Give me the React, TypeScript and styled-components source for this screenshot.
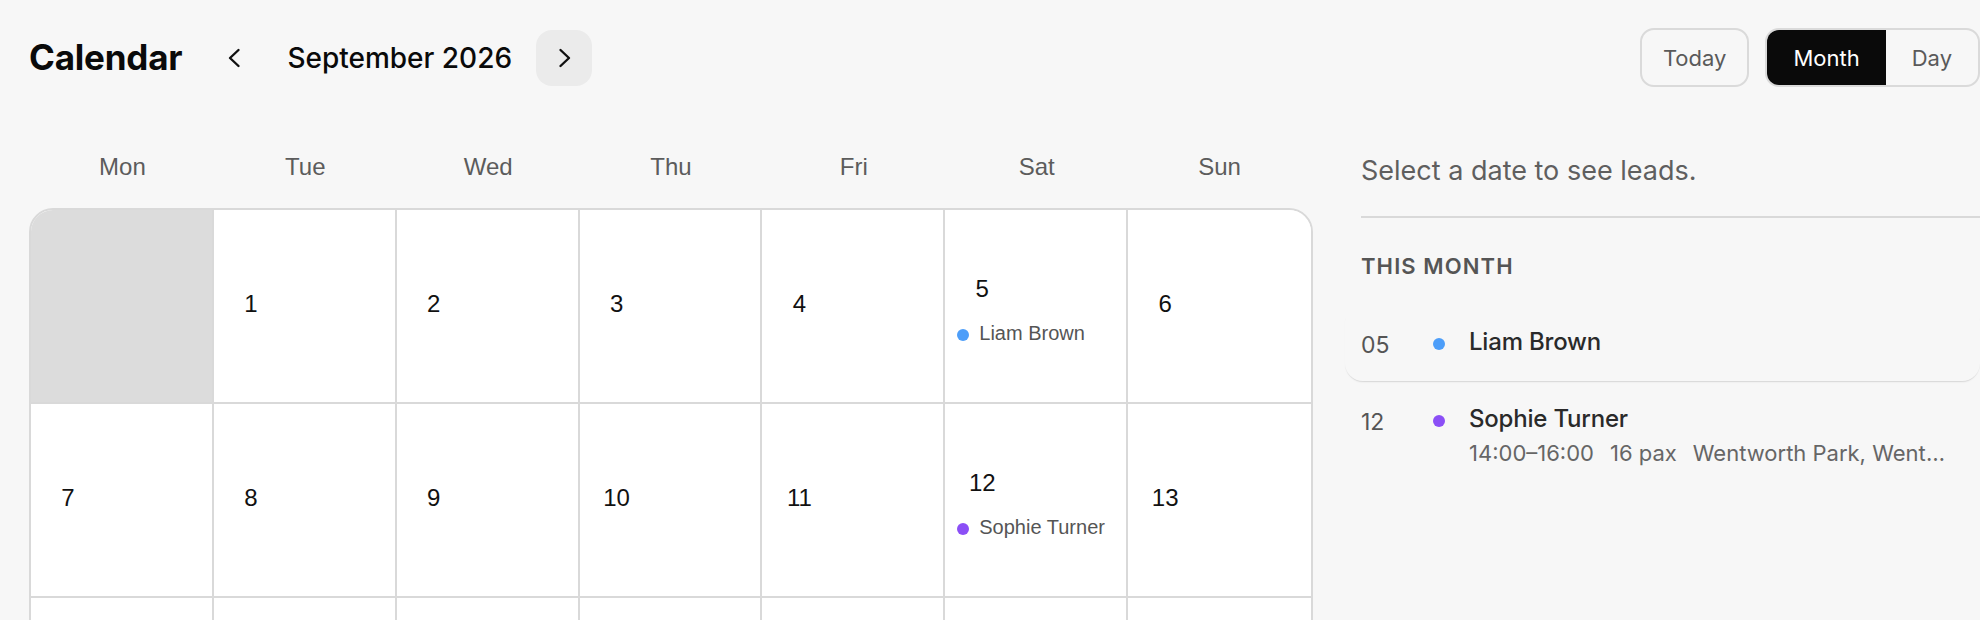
import React from 'react';
import styled, { createGlobalStyle } from 'styled-components';

interface Lead {
  day: number
  name: string
  color: string
  time?: string
  pax?: number
  place?: string
}

const leads: Lead[] = [
  { day: 5, name: 'Liam Brown', color: '#4d9ef9' },
  { day: 12, name: 'Sophie Turner', color: '#8b4ff6', time: '14:00–16:00', pax: 16, place: 'Wentworth Park, Wentworth Point' },
];

const weekdays = ['Mon', 'Tue', 'Wed', 'Thu', 'Fri', 'Sat', 'Sun'];

// Sept 2026 starts on a Tuesday, so one leading blank
const buildCells = (): (number | null)[] => {
  const cells: (number | null)[] = [null];
  for (let d = 1; d <= 30; d++) cells.push(d);
  while (cells.length % 7 !== 0) cells.push(null);
  return cells;
};

const Chevron: React.FC<{ dir: 'left' | 'right' }> = ({ dir }) => (
  <svg width="24" height="24" viewBox="0 0 24 24" fill="none" stroke="#111" strokeWidth="2.4" strokeLinecap="round" strokeLinejoin="round">
    {dir === 'left' ? <polyline points="15.5,4 7,12 15.5,20" /> : <polyline points="8.5,4 17,12 8.5,20" />}
  </svg>
);

const App: React.FC = () => {
  const cells = buildCells();

  return (
    <Page>
      <GlobalStyle />
      <Header>
        <HeaderLeft>
          <Title>Calendar</Title>
          <NavButton aria-label="Previous month"><Chevron dir="left" /></NavButton>
          <MonthLabel>September 2026</MonthLabel>
          <NavButton $hover aria-label="Next month"><Chevron dir="right" /></NavButton>
        </HeaderLeft>
        <HeaderRight>
          <TodayButton>Today</TodayButton>
          <Segmented>
            <Segment $active>Month</Segment>
            <Segment>Day</Segment>
          </Segmented>
        </HeaderRight>
      </Header>

      <Main>
        <CalendarColumn>
          <WeekdayRow>
            {weekdays.map((w) => <Weekday key={w}>{w}</Weekday>)}
          </WeekdayRow>
          <MonthGrid>
            {cells.map((day, i) => {
              const lead = leads.find((l) => l.day === day);
              return (
                <Cell key={i} $outside={day === null}>
                  {day !== null && <DayNumber>{day}</DayNumber>}
                  {lead && (
                    <CellEvent>
                      <Dot $color={lead.color} />
                      <span>{lead.name}</span>
                    </CellEvent>
                  )}
                </Cell>
              );
            })}
          </MonthGrid>
        </CalendarColumn>

        <SidePanel>
          <Prompt>Select a date to see leads.</Prompt>
          <Divider />
          <SectionLabel>THIS MONTH</SectionLabel>
          <LeadList>
            {leads.map((lead, i) => (
              <LeadCard key={lead.day} $active={i === 0}>
                <LeadDate>{String(lead.day).padStart(2, '0')}</LeadDate>
                <LeadDot $color={lead.color} />
                <LeadBody>
                  <LeadName>{lead.name}</LeadName>
                  {lead.time && (
                    <LeadDetails>
                      <span>{lead.time}</span>
                      <span>{lead.pax} pax</span>
                      <LeadPlace>{lead.place}</LeadPlace>
                    </LeadDetails>
                  )}
                </LeadBody>
              </LeadCard>
            ))}
          </LeadList>
        </SidePanel>
      </Main>
    </Page>
  );
};

const GlobalStyle = createGlobalStyle`
  html, body {
    margin: 0;
    padding: 0;
    background: #f7f7f7;
    overflow: hidden;
  }
  body {
    font-family: Inter, "Liberation Sans", sans-serif;
  }
  * {
    box-sizing: border-box;
  }
`;

const Page = styled.div`
  width: 1980px;
  height: 620px;
  overflow: hidden;
  padding: 28px 0 0 29px;
`;

const Header = styled.header`
  display: flex;
  justify-content: space-between;
  align-items: center;
  height: 59px;
`;

const HeaderLeft = styled.div`
  display: flex;
  align-items: center;
  gap: 24px;
`;

const Title = styled.h1`
  margin: 0 1px 0 0;
  font-size: 35px;
  font-weight: 700;
  color: #0a0a0a;
  letter-spacing: -0.2px;
  line-height: 1;
`;

const NavButton = styled.button<{ $hover?: boolean }>`
  width: 56px;
  height: 56px;
  border: none;
  border-radius: 16px;
  background: ${(p) => (p.$hover ? '#ebebeb' : 'transparent')};
  display: flex;
  align-items: center;
  justify-content: center;
  padding: 0;
  cursor: pointer;
`;

const MonthLabel = styled.span`
  font-size: 28px;
  font-weight: 500;
  color: #0a0a0a;
`;

const HeaderRight = styled.div`
  display: flex;
  align-items: center;
  gap: 16px;
`;

const TodayButton = styled.button`
  height: 59px;
  padding: 0 21px;
  border: 2px solid #dadada;
  border-radius: 14px;
  background: transparent;
  font-family: Inter, sans-serif;
  font-size: 22px;
  color: #5a5a5a;
  cursor: pointer;
`;

const Segmented = styled.div`
  display: flex;
  height: 59px;
  border: 2px solid #dadada;
  border-radius: 14px;
  overflow: hidden;
`;

const Segment = styled.button<{ $active?: boolean }>`
  padding: 0 26px;
  border: none;
  background: ${(p) => (p.$active ? '#0a0a0a' : 'transparent')};
  color: ${(p) => (p.$active ? '#ffffff' : '#5a5a5a')};
  font-family: Inter, sans-serif;
  font-size: 22px;
  cursor: pointer;
`;

const Main = styled.div`
  display: flex;
  align-items: flex-start;
  gap: 48px;
  margin-top: 60px;
`;

const CalendarColumn = styled.div`
  width: 1284px;
  flex-shrink: 0;
`;

const WeekdayRow = styled.div`
  display: grid;
  grid-template-columns: repeat(7, 1fr);
  height: 40px;
  padding: 0 2px;
`;

const Weekday = styled.div`
  text-align: center;
  line-height: 40px;
  font-family: "Liberation Sans", Arial, sans-serif;
  font-size: 24px;
  color: #5c5c5c;
`;

const MonthGrid = styled.div`
  margin-top: 21px;
  display: grid;
  grid-template-columns: repeat(7, 1fr);
  border: 2px solid #d9d9d9;
  border-radius: 24px;
  overflow: hidden;
  background: #fff;
`;

const Cell = styled.div<{ $outside?: boolean }>`
  height: 194px;
  padding: 0 11px 4px;
  display: flex;
  flex-direction: column;
  justify-content: center;
  gap: 6px;
  background: ${(p) => (p.$outside ? '#dcdcdc' : '#ffffff')};
  border-right: 2px solid #d9d9d9;
  border-bottom: 2px solid #d9d9d9;
  font-family: "Liberation Sans", Arial, sans-serif;

  &:nth-child(7n) {
    border-right: none;
  }
`;

const DayNumber = styled.div`
  width: 52px;
  height: 52px;
  display: flex;
  align-items: center;
  justify-content: center;
  font-size: 24px;
  color: #111;
`;

const CellEvent = styled.div`
  display: flex;
  align-items: center;
  gap: 10px;
  height: 24px;
  margin-left: 1px;
  font-size: 20px;
  color: #555;
  white-space: nowrap;
`;

const Dot = styled.span<{ $color: string }>`
  width: 12px;
  height: 12px;
  border-radius: 50%;
  flex-shrink: 0;
  margin-top: 3px;
  background: ${(p) => p.$color};
`;

const SidePanel = styled.aside`
  flex: 1;
  min-width: 0;
  padding-top: 5px;
`;

const Prompt = styled.p`
  margin: 0;
  font-size: 27px;
  line-height: 38px;
  color: #5f5f5f;
`;

const Divider = styled.hr`
  margin: 26px 0 0;
  border: none;
  border-top: 2px solid #d9d9d9;
`;

const SectionLabel = styled.h2`
  margin: 34px 0 0;
  font-size: 22px;
  line-height: 28px;
  font-weight: 600;
  letter-spacing: 0.05em;
  color: #555;
`;

const LeadList = styled.div`
  margin-top: 24px;
  margin-left: -16px;
`;

const LeadCard = styled.div<{ $active?: boolean }>`
  display: grid;
  grid-template-columns: 72px 12px 1fr;
  padding: 21px 30px 19px 16px;
  border-radius: 18px;
  box-shadow: ${(p) => (p.$active ? '0 2px 2px -1px rgba(0, 0, 0, 0.1), 0 1px 0 rgba(0, 0, 0, 0.04)' : 'none')};
`;

const LeadDate = styled.div`
  padding-top: 3px;
  font-size: 23px;
  line-height: 34px;
  color: #555;
`;

const LeadDot = styled.span<{ $color: string }>`
  width: 12px;
  height: 12px;
  margin-top: 13px;
  border-radius: 50%;
  background: ${(p) => p.$color};
`;

const LeadBody = styled.div`
  min-width: 0;
  padding-left: 24px;
`;

const LeadName = styled.div`
  font-size: 24px;
  line-height: 34px;
  font-weight: 500;
  color: #2a2a2a;
  letter-spacing: -0.2px;
`;

const LeadDetails = styled.div`
  display: flex;
  gap: 16px;
  margin-top: 2px;
  font-size: 22px;
  line-height: 30px;
  color: #666;
  white-space: nowrap;
`;

const LeadPlace = styled.span`
  flex: 1;
  min-width: 0;
  overflow: hidden;
  text-overflow: ellipsis;
`;

export default App;
